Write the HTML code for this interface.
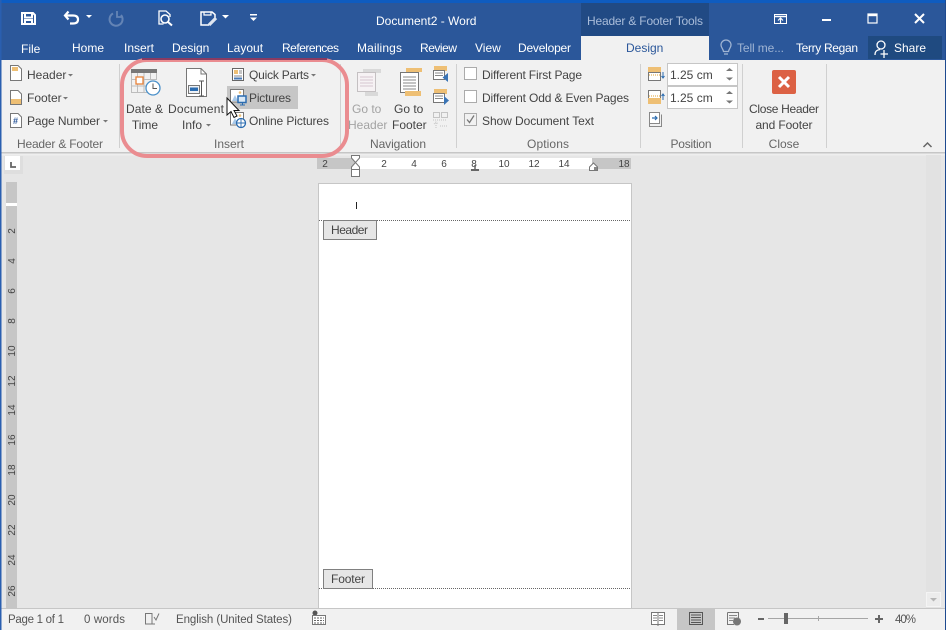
<!DOCTYPE html>
<html><head><meta charset="utf-8"><title>Document2 - Word</title>
<style>
html,body{margin:0;padding:0;background:#e6e6e6;width:946px;height:630px;overflow:hidden}
svg{display:block}
text{font-family:"Liberation Sans",sans-serif;font-size:12px;fill:#444}
.w{fill:#fff}
.g{fill:#666;text-anchor:middle}
.m{text-anchor:middle}
.r{font-size:10px;fill:#444;text-anchor:middle}
.s{font-size:11.5px;fill:#555}
.ln{fill:none;stroke:#7a7a7a}
</style></head><body>
<svg width="946" height="630" viewBox="0 0 946 630" xmlns="http://www.w3.org/2000/svg">
<!-- base -->
<rect width="946" height="630" fill="#e6e6e6"/>
<rect width="946" height="60" fill="#2b579a"/>
<rect width="946" height="3" fill="#0f5cc0"/>
<rect y="60" width="946" height="92" fill="#f1f1f1"/>
<rect y="152" width="946" height="1.5" fill="#c6c6c6"/>
<rect y="153.500" width="946" height="2" fill="#eeeeee"/>
<!-- context tab -->
<rect x="581" y="3" width="128" height="33" fill="#214a84"/>
<rect x="581" y="36" width="128" height="24" fill="#f1f1f1"/>
<rect x="868" y="36" width="74" height="23" fill="#1f4a80"/>
<!-- title text -->
<text class="w" x="376" y="25">Document2 - Word</text>
<text x="587" y="25" style="fill:#a9bcd9" textLength="116">Header &amp; Footer Tools</text>
<text class="w" x="21" y="53">File</text>
<text class="w" x="72" y="52">Home</text>
<text class="w" x="124" y="52">Insert</text>
<text class="w" x="172" y="52">Design</text>
<text class="w" x="227" y="52">Layout</text>
<text class="w" x="282" y="52" textLength="57">References</text>
<text class="w" x="357" y="52" textLength="45">Mailings</text>
<text class="w" x="420" y="52" textLength="37">Review</text>
<text class="w" x="475" y="52">View</text>
<text class="w" x="518" y="52" textLength="53">Developer</text>
<text x="626" y="52" style="fill:#2b579a">Design</text>
<text x="737" y="52" style="fill:#9fb4d3" textLength="47">Tell me...</text>
<text class="w" x="796" y="52" textLength="62">Terry Regan</text>
<text class="w" x="894" y="52">Share</text>

<!-- QAT icons -->
<g fill="none" stroke="#fff" stroke-width="2">
<path d="M22 13H33L35 15V24H22Z"/>
<path d="M25 13V17.500H32V13" stroke-width="2"/>
<path d="M25 24V20H32V24" stroke-width="2"/>
<path d="M68.500 11.500L65 15.500L68.500 19.500M65.500 15.500H73Q78 15.500 78 19.500T73 23.500H70" stroke-width="2.200"/>
<path d="M113 13.500A6.500 6.500 0 1 0 121 15" stroke="#6484b5" stroke-width="2"/>
<path d="M117 11V17H123" stroke="#6484b5" stroke-width="1.800"/>
<path d="M163.500 24H159V11H166L170 14.500V17" stroke-width="1.300"/>
<circle cx="165" cy="19" r="4" stroke-width="1.600"/>
<path d="M168 22L172 25.500" stroke-width="2"/>
<path d="M209 25H201V12H212L215 14.500V18" stroke-width="1.500"/>
<path d="M204 12V15H211V12" stroke-width="1.200"/>
<path d="M209 25L216 18" stroke-width="3.200" stroke="#dfe6f1"/>
</g>
<g fill="#fff">
<path d="M86 15H92L89 18Z"/>
<path d="M222 15H229L225.500 18.500Z"/>
<rect x="250" y="14" width="7" height="1.500"/>
<path d="M250 17.500H257L253.500 21Z"/>
</g>
<!-- window buttons -->
<g fill="none" stroke="#fff">
<rect x="774.500" y="14.500" width="12" height="9" stroke-width="1"/>
<path d="M774 16.500H787" stroke-width="1.500"/>
<path d="M780.500 23V18M778 20.500L780.500 18L783 20.500" stroke-width="1.200"/>
<path d="M822 20H831" stroke-width="2"/>
<rect x="868" y="14" width="9" height="9" stroke-width="1.200"/>
<path d="M868 15.200H877" stroke-width="2"/>
<path d="M915 14L924 23M924 14L915 23" stroke-width="2"/>
</g>
<!-- tell me bulb -->
<g fill="none" stroke="#9fb4d3" stroke-width="1.300">
<path d="M723.500 51.500C723 48.500 721 47.500 721 45A5 5 0 0 1 731 45C731 47.500 729 48.500 728.500 51.500Z"/>
<path d="M724 54H728"/>
</g>
<!-- share person -->
<g fill="none" stroke="#fff" stroke-width="1.300">
<circle cx="881" cy="45" r="4"/>
<path d="M875 55C875 51 877 50 880 49.500"/>
<path d="M884 50V58M880.500 54H888"/>
</g>

<!-- ribbon separators -->
<g fill="#d0d0d0">
<rect x="119" y="64" width="1" height="84"/><rect x="340" y="64" width="1" height="84"/><rect x="456" y="64" width="1" height="84"/><rect x="640" y="64" width="1" height="84"/><rect x="742" y="64" width="1" height="84"/><rect x="826" y="64" width="1" height="84"/>
</g>

<!-- header & footer group -->
<g fill="#fff" stroke="#777">
<path d="M10.500 65.500H18L21.500 69V80.500H10.500Z"/>
<path d="M10.500 90.500H18L21.500 94V104.500H10.500Z"/>
<path d="M10.500 113.500H18L21.500 117V127.500H10.500Z"/>
</g>
<rect x="12" y="67" width="6" height="4" fill="#eebf74"/>
<rect x="11" y="99" width="10" height="5" fill="#eebf74"/>
<text x="13" y="124" style="font-size:9px;fill:#2b579a;font-weight:bold">#</text>
<text x="27" y="79">Header</text>
<text x="27" y="102">Footer</text>
<text x="27" y="125" textLength="73">Page Number</text>
<g fill="#777">
<path d="M68 74H73L70.500 76.500Z"/><path d="M63 97H68L65.500 99.500Z"/><path d="M103 120H108L105.500 122.500Z"/>
<path d="M311 74H316L313.500 76.500Z"/><path d="M206 124H211L208.500 126.500Z"/>
</g>
<text class="g" x="60" y="148" textLength="86">Header &amp; Footer</text>

<!-- Insert group -->
<rect x="227" y="86" width="71" height="23" fill="#c6c6c6"/>
<!-- date -->
<rect x="131" y="69" width="26" height="4" fill="#777"/>
<g stroke="#bdbdbd" fill="none">
<path d="M131.500 73V92.500H148M156.500 73V80M137.500 73V92M144 73V92M150.500 73V80M131 79.500H156M131 86H146"/>
</g>
<rect x="136" y="77" width="7" height="7" fill="#fff" stroke="#e8833a" stroke-width="1.300"/>
<circle cx="153" cy="88" r="7" fill="#fff" stroke="#4a90c9" stroke-width="1.300"/>
<path d="M153 83.500V88.500H157" fill="none" stroke="#555"/>
<text class="m" x="144.500" y="113" textLength="37">Date &amp;</text>
<text class="m" x="145" y="129">Time</text>
<!-- document -->
<path d="M186.500 68.500H201L206.500 74V96.500H186.500Z" fill="#fff" stroke="#777"/>
<path d="M201 68.500V74H206.500" fill="none" stroke="#777"/>
<rect x="188.500" y="85.500" width="11" height="8" fill="#eef1f5" stroke="#777"/>
<rect x="190" y="87.500" width="8" height="3.500" fill="#2b6cb0"/>
<path d="M199 81H204M201.500 81V96M199 96H204" fill="none" stroke="#555"/>
<text class="m" x="196" y="113" textLength="56">Document</text>
<text x="182" y="129">Info</text>
<!-- quick parts -->
<rect x="232.500" y="68.500" width="11" height="12" fill="#fff" stroke="#666"/>
<rect x="234" y="70" width="4" height="4" fill="#eebf74"/>
<path d="M239 71H242M239 73H242M234 76H242" stroke="#888"/>
<rect x="234" y="77.500" width="8" height="2" fill="#4a7ab5"/>
<text x="249" y="79" textLength="60">Quick Parts</text>
<!-- pictures -->
<path d="M230.500 89.500H243.500V102H230.500Z" fill="#fff" stroke="#777"/>
<path d="M232 101L235 95L238 101Z" fill="#a8c8e8"/>
<circle cx="240" cy="92.500" r="1.300" fill="#eebf74"/>
<rect x="238" y="96" width="8" height="6.500" fill="#dbe9f6" stroke="#2b6cb0" stroke-width="1.500"/>
<path d="M240 105H245M242.500 103V105" stroke="#2b6cb0"/>
<text x="249" y="102" textLength="42">Pictures</text>
<!-- online pictures -->
<path d="M230.500 112.500H243.500V125H230.500Z" fill="#fff" stroke="#777"/>
<path d="M232 124L235 118L238 124Z" fill="#a8c8e8"/>
<circle cx="240" cy="115.500" r="1.300" fill="#eebf74"/>
<circle cx="241" cy="123" r="4.500" fill="#fff" stroke="#2b6cb0" stroke-width="1.300"/>
<path d="M236.500 123H245.500M241 118.500V127.500" stroke="#2b6cb0" stroke-width=".9"/>
<text x="249" y="125" textLength="80">Online Pictures</text>
<text class="g" x="229" y="148">Insert</text>

<!-- Navigation -->
<rect x="363" y="69" width="18" height="4" fill="#d9d9d9"/>
<path d="M357.500 72.500H375.500V91.500H357.500Z" fill="#f6f2f4" stroke="#c4c0c2"/>
<path d="M360 77H373M360 80H373M360 83H373M360 86H373" stroke="#d5c7d0"/>
<rect x="365" y="92" width="13" height="4" fill="#d9d9d9"/>
<text x="352" y="113" style="fill:#a3a3a3">Go to</text>
<text x="348" y="129" style="fill:#a3a3a3">Header</text>
<rect x="406" y="68" width="16" height="4" fill="#eebf74"/>
<rect x="400.500" y="72.500" width="18" height="20" fill="#fff" stroke="#777"/>
<path d="M403 77H416M403 80H416M403 83H416M403 86H416M403 89H416" stroke="#888"/>
<rect x="405" y="91" width="16" height="5" fill="#eebf74"/>
<text x="394" y="113">Go to</text>
<text x="392" y="129">Footer</text>
<!-- small nav -->
<rect x="434" y="66" width="13" height="5" fill="#eebf74"/>
<rect x="433.500" y="70.500" width="11" height="9" fill="#fff" stroke="#777"/>
<path d="M435 73H443M435 75.500H443" stroke="#888"/>
<path d="M448 73V82L442.500 77.500Z" fill="#3a74b5"/>
<rect x="434" y="89" width="13" height="5" fill="#eebf74"/>
<rect x="433.500" y="93.500" width="11" height="9" fill="#fff" stroke="#777"/>
<path d="M435 96H443M435 98.500H443" stroke="#888"/>
<path d="M444 96V105L449 100.500Z" fill="#3a74b5"/>
<g fill="none" stroke="#c4c4c4">
<rect x="433.500" y="112.500" width="6" height="5"/><rect x="441.500" y="112.500" width="6" height="5"/>
<path d="M433 120H447M436 128V122M434 124L436 122L438 124M440 126H447" stroke-dasharray="1 1"/>
</g>
<text class="g" x="398" y="148" textLength="56">Navigation</text>

<!-- Options -->
<g fill="#fff" stroke="#ababab">
<rect x="464.500" y="67.500" width="12" height="12"/>
<rect x="464.500" y="90.500" width="12" height="12"/>
<rect x="464.500" y="113.500" width="12" height="12" fill="#f1f1f1"/>
</g>
<path d="M467 119.500L469.500 122.500L474 115.500" fill="none" stroke="#777" stroke-width="1.300"/>
<text x="482" y="79" textLength="100">Different First Page</text>
<text x="482" y="102" textLength="147">Different Odd &amp; Even Pages</text>
<text x="482" y="125" textLength="112">Show Document Text</text>
<text class="g" x="548" y="148" textLength="42">Options</text>

<!-- Position -->
<rect x="648" y="67" width="13" height="5" fill="#eebf74"/>
<rect x="648.500" y="72.500" width="12" height="8" fill="#fff" stroke="#777"/>
<path d="M649 75H660" stroke="#e0a030" stroke-dasharray="1 1"/>
<path d="M663 72V78M661.500 76L663 78L664.500 76" fill="none" stroke="#2b6cb0"/>
<rect x="648.500" y="90.500" width="12" height="8" fill="#fff" stroke="#777"/>
<rect x="648" y="98" width="13" height="6" fill="#eebf74"/>
<path d="M649 96H660" stroke="#e0a030" stroke-dasharray="1 1"/>
<path d="M663 100V94M661.500 96L663 94L664.500 96" fill="none" stroke="#2b6cb0"/>
<rect x="649.500" y="112.500" width="10" height="11" fill="#fff" stroke="#888"/>
<path d="M649.500 114V126.500H661.500V114.500" fill="none" stroke="#888"/>
<path d="M652 118H657M655 116L657 118L655 120" fill="none" stroke="#2b6cb0" stroke-width="1.200"/>
<rect x="667.500" y="63.500" width="70" height="22" fill="#fff" stroke="#c6c6c6"/>
<rect x="667.500" y="86.500" width="70" height="22" fill="#fff" stroke="#c6c6c6"/>
<text x="670" y="79">1.25 cm</text>
<text x="670" y="102">1.25 cm</text>
<g fill="#777">
<path d="M726 71L729.500 68L733 71Z"/><path d="M726 77.500H733L729.500 80.500Z"/>
<path d="M726 94L729.500 91L733 94Z"/><path d="M726 100.500H733L729.500 103.500Z"/>
</g>
<text class="g" x="691" y="148" textLength="41">Position</text>

<!-- Close -->
<rect x="772" y="70" width="24" height="24" rx="2" fill="#dc6144"/>
<path d="M779 77L789 87M789 77L779 87" stroke="#fff" stroke-width="3"/>
<text class="m" x="784" y="113" textLength="70">Close Header</text>
<text class="m" x="784" y="129" textLength="57">and Footer</text>
<text class="g" x="784" y="148">Close</text>
<path d="M923.500 147L927.500 143L931.500 147" fill="none" stroke="#666" stroke-width="1.500"/>

<!-- Rulers -->
<rect x="317" y="158" width="314" height="11" fill="#c6c6c6"/>
<rect x="355" y="158" width="237" height="11" fill="#fff"/>
<text class="r" x="325" y="167">2</text>
<text class="r" x="384" y="167">2</text>
<text class="r" x="414" y="167">4</text>
<text class="r" x="444" y="167">6</text>
<text class="r" x="474" y="167">8</text>
<text class="r" x="504" y="167">10</text>
<text class="r" x="534" y="167">12</text>
<text class="r" x="564" y="167">14</text>
<text class="r" x="624" y="167">18</text>
<path d="M351.500 155.500H359.500V158L355.500 162.500L351.500 158Z M351.500 169.500V167L355.500 162.500L359.500 167V169.500Z" fill="#fff" stroke="#777"/>
<rect x="351.500" y="169.500" width="8" height="7" fill="#fff" stroke="#777"/>
<path d="M471 170H479" stroke="#666" stroke-width="2"/>
<path d="M475 165V170" stroke="#666" stroke-width="1.500"/>
<path d="M589.500 170.500V167L593.500 163L597.500 167V170.500Z" fill="#fff" stroke="#777"/>
<rect x="594" y="167" width="3" height="3" fill="#888"/>

<!-- Vertical ruler -->
<rect x="4" y="156" width="19" height="18" fill="#dedede"/>
<rect x="5" y="156" width="15" height="14" fill="#fff"/>
<path d="M11 162V167H16" fill="none" stroke="#666" stroke-width="1.800"/>
<rect x="6" y="182" width="11" height="426" fill="#c6c6c6"/>
<rect x="6" y="203" width="11" height="3" fill="#fff"/>
<g class="vr">
<text class="r" transform="translate(15 231) rotate(-90)">2</text>
<text class="r" transform="translate(15 261) rotate(-90)">4</text>
<text class="r" transform="translate(15 291) rotate(-90)">6</text>
<text class="r" transform="translate(15 321) rotate(-90)">8</text>
<text class="r" transform="translate(15 351) rotate(-90)">10</text>
<text class="r" transform="translate(15 381) rotate(-90)">12</text>
<text class="r" transform="translate(15 410) rotate(-90)">14</text>
<text class="r" transform="translate(15 440) rotate(-90)">16</text>
<text class="r" transform="translate(15 470) rotate(-90)">18</text>
<text class="r" transform="translate(15 500) rotate(-90)">20</text>
<text class="r" transform="translate(15 530) rotate(-90)">22</text>
<text class="r" transform="translate(15 560) rotate(-90)">24</text>
<text class="r" transform="translate(15 591) rotate(-90)">26</text>
</g>

<!-- Page -->
<rect x="318.500" y="183.500" width="313" height="426" fill="#fff" stroke="#c6c6c6"/>
<path d="M319 220.500H631M319 588.500H631" stroke="#666" stroke-dasharray="1 1"/>
<rect x="356" y="202" width="1" height="7" fill="#222"/>
<rect x="323.500" y="220.500" width="53" height="19" fill="#e6e6e6" stroke="#808080"/>
<text x="331" y="234" textLength="37">Header</text>
<rect x="323.500" y="569.500" width="49" height="19" fill="#e6e6e6" stroke="#808080"/>
<text x="331" y="583" textLength="34">Footer</text>

<!-- Scrollbar -->
<rect x="926" y="155" width="15" height="454" fill="#e2e2e2"/>
<rect x="926.500" y="592.500" width="14" height="14" fill="#ececec" stroke="#f4f4f4"/>
<path d="M930 598H937L933.500 601.500Z" fill="#b5b5b5"/>

<!-- Status bar -->
<rect y="608" width="946" height="22" fill="#f1f1f1"/>
<rect y="608" width="946" height="1" fill="#c6c6c6"/>
<rect x="677" y="609" width="38" height="21" fill="#c6c6c6"/>
<text class="s" x="8" y="623" textLength="56">Page 1 of 1</text>
<text class="s" x="84" y="623" textLength="41">0 words</text>
<path d="M145.500 613.500H152V624H145.500ZM152 616V624.500M155 624H152" fill="none" stroke="#777"/>
<path d="M154 617L156 620L159 613.500" fill="none" stroke="#777"/>
<text class="s" x="176" y="623" textLength="116">English (United States)</text>
<circle cx="315" cy="613" r="2.500" fill="#555"/>
<path d="M312.500 615.500H325.500V624.500H312.500Z" fill="#fff" stroke="#777"/>
<path d="M314 618H324M314 620.500H324M314 623H324" stroke="#666" stroke-dasharray="2 1"/>
<path d="M651.500 612.500H664.500V624.500H651.500ZM658 612.500V626" fill="#fff" stroke="#777"/>
<path d="M653 615.500H657M653 618H657M653 620.500H657M659 615.500H663M659 618H663M659 620.500H663" stroke="#888"/>
<rect x="689.500" y="612.500" width="13" height="12" fill="none" stroke="#555"/>
<path d="M691 615H701M691 617.500H701M691 620H701M691 622.500H701" stroke="#555"/>
<path d="M727.500 612.500H738.500V621M727.500 612.500V624.500H734" fill="none" stroke="#777"/>
<path d="M729 615.500H737M729 618H735M729 620.500H733" stroke="#888"/>
<circle cx="737" cy="621.500" r="4" fill="#777"/>
<rect x="758" y="618" width="6" height="2" fill="#666"/>
<rect x="768" y="618" width="100" height="1" fill="#a6a6a6"/>
<rect x="818" y="616" width="1" height="5" fill="#a6a6a6"/>
<rect x="784" y="613" width="4" height="11" fill="#666"/>
<path d="M875 619H883M879 615V623" stroke="#666" stroke-width="2"/>
<text class="s" x="895" y="623" textLength="21">40%</text>

<!-- edges -->
<rect x="0" y="0" width="1.500" height="630" fill="#2a5fb0"/>
<rect x="945" y="0" width="1" height="630" fill="#1e4a90"/>

<!-- highlight ring -->
<rect x="122" y="60" width="225" height="96" rx="25" fill="none" stroke="#ea8c90" stroke-width="4"/>
<path d="M142 59H327" stroke="#8a3b62" stroke-width="2"/>

<!-- mouse cursor -->
<path d="M227 98V115L231 111.500L234 117.500L237 116L234 110.500H239Z" fill="#fff" stroke="#111"/>
</svg>
</body></html>
